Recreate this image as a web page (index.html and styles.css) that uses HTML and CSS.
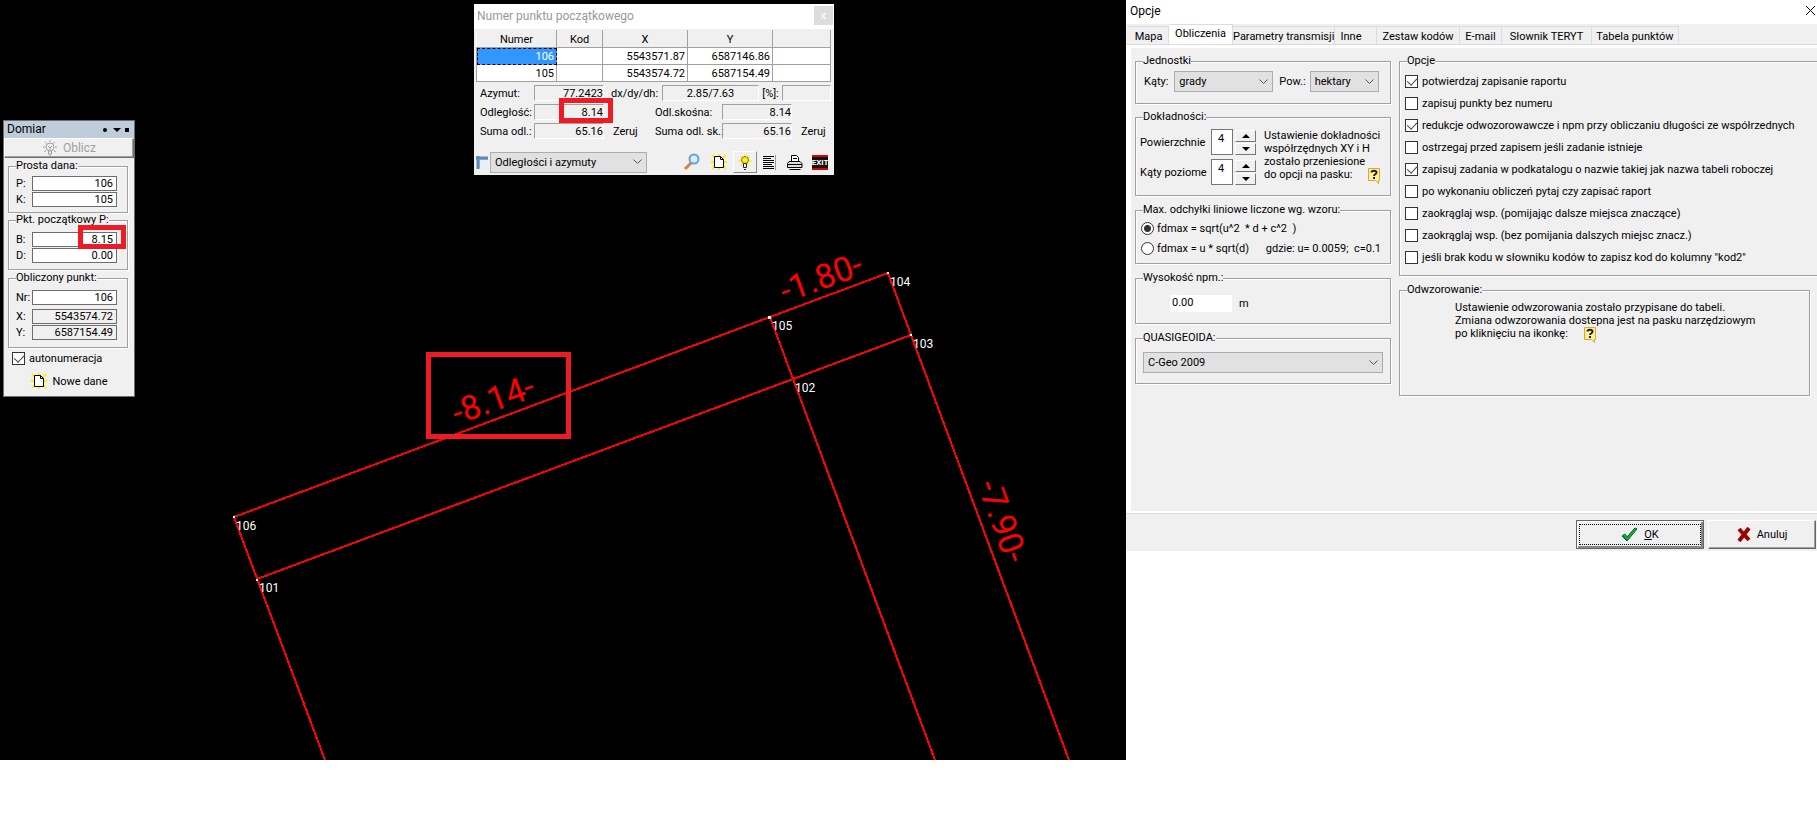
FILE: index.html
```
<!DOCTYPE html>
<html lang="pl">
<head>
<meta charset="utf-8">
<title>C-Geo – Opcje</title>
<link rel="stylesheet" href="styles.css">
</head>
<body>
<svg class="defs" aria-hidden="true">
  <symbol id="new-page" viewBox="0 0 18 16">
    <path d="M2 1l4 4M16 1l-4 4M1 8h16M2 15l4-4M16 15l-4-4M9 0v16" stroke="#ffee00" stroke-width="2" fill="none"/>
    <path d="M4.500 2.500h6l3 3v8h-9z" fill="#fff" stroke="#000"/><path d="M10.500 2.500v3h3" fill="none" stroke="#000"/>
  </symbol>
  <symbol id="help" viewBox="0 0 14 16">
    <path d="M1.500.5h11v12h-1v3l-3-3h-7z" fill="#fff0a0" stroke="#dba62c"/>
    <path d="M4.500 4.500c0-2.500 5-2.500 5 0 0 2-2.500 1.500-2.500 3.500M7 9v2" fill="none" stroke="#222" stroke-width="2"/>
  </symbol>
</svg>
<main class="screen">
  <section class="map">
    <svg class="plan" viewBox="0 0 1126 760" role="img" aria-label="Mapa">
      <g class="edges">
        <path d="M234 517L888 273L1069 760M257 579L911 335M234 517L325 760M770 317L935 760"/>
      </g>
      <g fill="#fff"><path d="M233 516h2v2h-2zM256 579h2v2h-2zM768 316h3v3h-3zM887 272h2v2h-2zM910 334h2v2h-2z"/></g>
      <g class="point">
        <text x="236" y="530">106</text><text x="259" y="592">101</text><text x="772" y="330">105</text>
        <text x="890" y="286">104</text><text x="913" y="348">103</text><text x="795" y="392">102</text>
      </g>
      <g class="measure">
        <text transform="translate(457 425) rotate(-20)">-8.14-</text>
        <text transform="translate(785 303) rotate(-20)">-1.80-</text>
        <text transform="translate(977 485) rotate(70)">-7.90-</text>
      </g>
    </svg>
    <div class="mark mark-map"></div>

    <form class="domiar">
      <header class="domiar-head"><span>Domiar</span>
        <svg width="29" height="8"><circle cx="3" cy="4" r="2"/><path d="M11 2h8l-4 4zM23 2h4v4h-4z"/></svg>
      </header>
      <button class="compute" type="button" disabled>
        <svg width="16" height="16" viewBox="0 0 16 16" fill="none" stroke="#a0a0a0"><circle cx="8" cy="7" r="4"/><path d="M8 0v2M1 7h2M13 7h2M3 2l1.500 1.500M13 2l-1.500 1.500M2 12l2-1.500M14 12l-2-1.500M6.500 11v3h3v-3M7 15h2M6 6l2 2 2-2M8 8v3"/></svg>Oblicz
      </button>
      <fieldset class="box given"><legend>Prosta dana:</legend>
        <label class="pair">P: <input value="106"></label>
        <label class="pair">K: <input value="105"></label>
      </fieldset>
      <fieldset class="box start"><legend>Pkt. początkowy P:</legend>
        <label class="pair">B: <input value="8.15"></label>
        <label class="pair">D: <input value="0.00"></label>
      </fieldset>
      <fieldset class="box result"><legend>Obliczony punkt:</legend>
        <label class="pair number">Nr: <input value="106"></label>
        <label class="pair">X: <input class="ro" value="5543574.72" readonly></label>
        <label class="pair">Y: <input class="ro" value="6587154.49" readonly></label>
      </fieldset>
      <label class="check auto"><input type="checkbox" checked>autonumeracja</label>
      <button class="flat fresh" type="button"><svg width="18" height="16"><use href="#new-page"/></svg>Nowe dane</button>
      <div class="mark mark-b"></div>
    </form>

    <form class="point-window">
      <header class="pw-head"><span>Numer punktu początkowego</span><button type="button" aria-label="Zamknij">x</button></header>
      <table class="grid">
        <colgroup><col class="c1"><col class="c2"><col class="c3"><col class="c3"><col class="c5"></colgroup>
        <thead><tr><th>Numer</th><th>Kod</th><th>X</th><th>Y</th><th></th></tr></thead>
        <tbody>
          <tr><td class="sel">106</td><td></td><td>5543571.87</td><td>6587146.86</td><td></td></tr>
          <tr><td>105</td><td></td><td>5543574.72</td><td>6587154.49</td><td></td></tr>
        </tbody>
      </table>
      <div class="results">
        <div class="line"><span class="name">Azymut:</span><output class="val">77.2423</output><span class="dx">dx/dy/dh:</span><output class="val mid">2.85/7.63</output><span class="pct">[%]:</span><output class="val rest"></output></div>
        <div class="line"><span class="name">Odległość:</span><output class="val">8.14</output><span class="zero"></span><span class="skew">Odl.skośna:</span><output class="val">8.14</output></div>
        <div class="line"><span class="name">Suma odl.:</span><output class="val">65.16</output><button class="flat zero" type="button">Zeruj</button><span class="skew">Suma odl. sk.:</span><output class="val">65.16</output><button class="flat zero" type="button">Zeruj</button></div>
      </div>
      <div class="tools">
        <svg width="12" height="13"><path d="M1 1h11v11H1z" fill="#a9c4e2"/><path d="M4 4h8v9H4z" fill="#e6eef7"/><path d="M0 2h12M2 0v13" stroke="#5f86b8" stroke-width="3"/></svg>
        <select aria-label="Raport"><option>Odległości i azymuty</option></select>
        <button class="flat find" type="button" aria-label="Szukaj"><svg width="18" height="18"><path d="M2 16l6-6" stroke="#d48536" stroke-width="3"/><circle cx="11" cy="6" r="4.500" fill="#d5efff" stroke="#6c9fd8" stroke-width="2"/></svg></button>
        <button class="flat" type="button" aria-label="Nowy"><svg width="18" height="16"><use href="#new-page"/></svg></button>
        <button class="flat raised" type="button" aria-label="Podpowiedź"><svg width="16" height="16"><path d="M8 0v14M1 7h14M3 2l10 10M13 2L3 12" stroke="#ffe900"/><circle cx="8" cy="6" r="3.500" fill="#ffef20" stroke="#876e00"/><path d="M6.500 9.500h3v4h-3z" fill="#fff" stroke="#222"/><path d="M7 15.500h2" stroke="#222"/></svg></button>
        <button class="flat" type="button" aria-label="Raport"><svg width="16" height="17"><path d="M1 2.500h11M1 4.500h8M1 6.500h11M1 8.500h11M1 10.500h9M1 12.500h11M1 14.500h11" stroke="#000"/><path d="M13.500 1v15" stroke="#999"/></svg></button>
        <button class="flat" type="button" aria-label="Drukuj"><svg width="18" height="17"><path d="M5.500 7V1.500h5l2 2V7" fill="#fff" stroke="#000"/><path d="M3 7.500h11l2 2v4H1.500v-4z" fill="#ddd" stroke="#000"/><path d="M1 10.500h15M3.500 15.500h11M7 4.500h4" stroke="#000"/></svg></button>
        <button class="flat exit" type="button">EXIT</button>
      </div>
      <div class="mark mark-d"></div>
    </form>
  </section>

  <form class="options">
    <header class="opt-head"><span>Opcje</span><button class="flat" type="button" aria-label="Zamknij"><svg width="12" height="12"><path d="M1 1l9 9M10 1l-9 9" stroke="#000"/></svg></button></header>
    <nav class="tabs">
      <button type="button" class="t1">Mapa</button><button type="button" class="t2 on">Obliczenia</button><button type="button" class="t3">Parametry transmisji</button><button type="button" class="t4">Inne</button><button type="button" class="t5">Zestaw kodów</button><button type="button" class="t6">E-mail</button><button type="button" class="t7">Słownik TERYT</button><button type="button" class="t8">Tabela punktów</button>
    </nav>
    <div class="page">
      <div class="left">
        <fieldset class="box units"><legend>Jednostki</legend>
          <div class="units-body">
            <label>Kąty: <select class="s-angle"><option>grady</option></select></label>
            <label>Pow.: <select class="s-area"><option>hektary</option></select></label>
          </div>
        </fieldset>
        <fieldset class="box precision"><legend>Dokładności:</legend>
          <div class="precision-body">
            <div class="spins">
              <div class="spin"><label for="area">Powierzchnie</label><input id="area" value="4"><span class="arrows"><button type="button" aria-label="Więcej" class="up"></button><button type="button" aria-label="Mniej" class="down"></button></span></div>
              <div class="spin"><label for="angle">Kąty poziome</label><input id="angle" value="4"><span class="arrows"><button type="button" aria-label="Więcej" class="up"></button><button type="button" aria-label="Mniej" class="down"></button></span></div>
            </div>
            <p class="note">Ustawienie dokładności<br>współrzędnych XY i H<br>zostało przeniesione<br>do opcji na pasku: <svg class="q" width="14" height="16"><use href="#help"/></svg></p>
          </div>
        </fieldset>
        <fieldset class="box limits"><legend>Max. odchyłki liniowe liczone wg. wzoru:</legend>
          <label class="check"><input type="radio" name="f" checked>fdmax = sqrt(u^2&nbsp; * d + c^2&nbsp; )</label>
          <div class="limit-row"><label class="check"><input type="radio" name="f">fdmax = u * sqrt(d)</label><span>gdzie: u= 0.0059;&nbsp; c=0.1</span></div>
        </fieldset>
        <fieldset class="box height"><legend>Wysokość npm.:</legend>
          <label><input value="0.00">m</label>
        </fieldset>
        <fieldset class="box geoid"><legend>QUASIGEOIDA:</legend>
          <select aria-label="Quasigeoida"><option>C-Geo 2009</option></select>
        </fieldset>
      </div>
      <div class="right">
        <fieldset class="box choices"><legend>Opcje</legend>
          <label class="check"><input type="checkbox" checked>potwierdzaj zapisanie raportu</label>
          <label class="check"><input type="checkbox">zapisuj punkty bez numeru</label>
          <label class="check"><input type="checkbox" checked>redukcje odwozorowawcze i npm przy obliczaniu długości ze współrzednych</label>
          <label class="check"><input type="checkbox">ostrzegaj przed zapisem jeśli zadanie istnieje</label>
          <label class="check"><input type="checkbox" checked>zapisuj zadania w podkatalogu o nazwie takiej jak nazwa tabeli roboczej</label>
          <label class="check"><input type="checkbox">po wykonaniu obliczeń pytaj czy zapisać raport</label>
          <label class="check"><input type="checkbox">zaokrąglaj wsp. (pomijając dalsze miejsca znaczące)</label>
          <label class="check"><input type="checkbox">zaokrąglaj wsp. (bez pomijania dalszych miejsc znacz.)</label>
          <label class="check"><input type="checkbox">jeśli brak kodu w słowniku kodów to zapisz kod do kolumny "kod2"</label>
        </fieldset>
        <fieldset class="box projection"><legend>Odwzorowanie:</legend>
          <p class="note">Ustawienie odwzorowania zostało przypisane do tabeli.<br>Zmiana odwzorowania dostepna jest na pasku narzędziowym<br>po kliknięciu na ikonkę: <svg class="q" width="14" height="16"><use href="#help"/></svg></p>
        </fieldset>
      </div>
    </div>
    <footer class="actions">
      <button type="button" class="ok"><span><svg width="17" height="15"><path d="M1 9l3-2 2 3 8-9 2 1L6 14z" fill="#00a000" stroke="#00308a" stroke-width="1"/><path d="M2 9l2-1 2 4 9-10" stroke="#10b010" stroke-width="2" fill="none"/></svg><span><u>O</u>K</span></span></button>
      <button type="button" class="cancel"><svg width="14" height="15"><path d="M2 2l10 11M12 1L2 14" stroke="#a00000" stroke-width="4"/></svg>Anuluj</button>
    </footer>
  </form>
</main>
</body>
</html>
```
FILE: styles.css
```
* { box-sizing: border-box; }
body { margin: 0; background: #fff; color: #000; font: 11px/13px Roboto, "Liberation Sans", sans-serif; }
button, input, select { font: inherit; color: inherit; margin: 0; padding: 0; border-radius: 0; }
label, legend, button { white-space: nowrap; }
svg { flex: none; }
.defs { position: absolute; width: 0; height: 0; }
.screen { display: grid; grid-template-columns: 1126fr 691fr; align-items: start; }

/* map canvas */
.map { position: relative; background: #000; }
.plan { display: block; width: 100%; height: auto; }
.edges { fill: none; stroke: #f00; stroke-width: 2; shape-rendering: crispEdges; }
.point { fill: #fff; font-size: 12px; }
.measure { fill: #f00; font-size: 34px; }
.mark { position: absolute; border: 5px solid #ed1c24; pointer-events: none; }
.mark-map { left: 426px; top: 352px; width: 145px; height: 87px; }
.mark-b { left: 74px; top: 104px; width: 48px; height: 24px; }
.mark-d { left: 85px; top: 94px; width: 54px; height: 25px; }

/* shared parts */
.box { --inset: 7px; min-width: 0; margin: 0; padding: 0 var(--inset); border: 1px solid #a0a0a0; box-shadow: 1px 1px 0 #fff, inset 1px 1px 0 #fff; }
.box legend { margin-left: calc(7px - var(--inset)); padding: 0; line-height: 14px; background: #f0f0f0; }
.flat { display: inline-flex; align-items: center; border: 0; background: none; }
.check { display: flex; align-items: center; gap: 4px; }
.check input { appearance: none; position: relative; flex: none; width: 13px; height: 13px; background: #fff; border: 1px solid #333; }
.check input[type="checkbox"]:checked::before { content: ""; position: absolute; left: 3px; top: 0; width: 5px; height: 8px; border: solid #444; border-width: 0 1px 1px 0; transform: rotate(42deg); }
.check input[type="radio"] { border-radius: 50%; }
.check input[type="radio"]:checked { background: radial-gradient(#333 3px, #fff 4px); }
select { appearance: none; height: 21px; padding: 0 4px; border: 1px solid #adadad; background: #e1e1e1 url("data:image/svg+xml,%3Csvg xmlns='http://www.w3.org/2000/svg' width='9' height='6'%3E%3Cpath d='M.5.5l4 4 4-4' fill='none' stroke='%23555'/%3E%3C/svg%3E") no-repeat right 4px center; }
.note { margin: 0; line-height: 13px; white-space: nowrap; }
.q { vertical-align: top; margin-left: 12px; }

/* Domiar panel */
.domiar { position: absolute; left: 3px; top: 120px; width: 132px; padding-bottom: 7px; background: #f0f0f0; border: 1px solid #6d6d6d; display: flex; flex-direction: column; }
.domiar-head { display: flex; justify-content: space-between; align-items: center; height: 17px; padding: 0 3px; background: #bfcddb; font-size: 12px; }
.compute { display: flex; align-items: center; justify-content: center; gap: 5px; height: 20px; background: #f0f0f0; color: #a0a0a0; border: 1px solid; border-color: #fff #6d6d6d #6d6d6d #fff; box-shadow: inset -1px -1px 0 #a0a0a0; font-size: 12px; }
.domiar .box { margin: 0 6px 0 4px; padding-right: 10px; }
.domiar .given { margin-top: 1px; padding-top: 2px; padding-bottom: 5px; }
.domiar .start { padding-top: 4px; padding-bottom: 6px; }
.domiar .result { margin-top: 1px; padding-top: 4px; padding-bottom: 7px; }
.pair { display: grid; grid-template-columns: 16px 1fr; align-items: center; height: 16px; }
.pair input { width: 100%; height: 15px; padding: 0 3px; border: 1px solid #6d6d6d; background: #fff; text-align: right; }
.pair .ro { background: #f0f0f0; }
.number { margin-bottom: 3px; }
.auto { margin: 4px 8px 0; }
.fresh { align-self: center; gap: 4px; margin-top: 8px; }

/* point window */
.point-window { position: absolute; left: 474px; top: 4px; width: 360px; background: #f0f0f0; }
.pw-head { display: flex; justify-content: space-between; padding: 2px 1px 2px 3px; height: 25px; background: #fff; color: #999; align-items: center; font-size: 12px; }
.pw-head button { width: 19px; height: 19px; border: 0; background: #ddd; color: #fff; align-self: flex-start; font-size: 11px; }
.grid { width: 355px; margin: 1px 0 0 2px; border-collapse: collapse; table-layout: fixed; background: #fff; }
.c1 { width: 80px; } .c2 { width: 46px; } .c3 { width: 85px; } .c5 { width: 58px; }
.grid th { height: 17px; padding: 0; font-weight: normal; background: #f0f0f0; border: 1px solid #a0a0a0; border-left-color: #fff; border-top-color: #f0f0f0; }
.grid th + th { border-left-color: #a0a0a0; }
.grid td { height: 17px; padding: 0 2px; text-align: right; border: 1px solid #a0a0a0; }
.grid .sel { background: #3296ff; color: #fff; outline: 1px dashed #000; outline-offset: -1px; }
.results { display: grid; grid-template-columns: minmax(0, 1fr); gap: 3px; padding: 3px 3px 0 6px; white-space: nowrap; }
.line { display: flex; align-items: center; height: 16px; }
.line > * { flex: none; }
.name { width: 54px; }
.val { width: 70px; height: 16px; border: 1px solid; border-color: #a0a0a0 #fff #fff #a0a0a0; text-align: right; line-height: 15px; }
.dx { width: 58px; padding-left: 7px; }
.val.mid { width: 97px; text-align: center; }
.pct { width: 23px; text-align: center; }
.line .rest { flex: 1; }
.zero { width: 51px; padding-left: 9px; }
.zero:last-child { width: auto; }
.skew { width: 67px; }
.tools { display: flex; align-items: center; gap: 8px; height: 36px; padding: 10px 6px 0 2px; }
.tools select { flex: 0 0 157px; margin-left: -6px; }
.find { margin-left: auto; margin-right: 1px; }
.raised { padding: 2px 3px; margin: 0 -3px; border: 1px solid; border-color: #fff #888 #888 #fff; }
.exit { width: 16px; height: 15px; justify-content: center; background: #111; color: #fff; font-weight: bold; font-size: 8px; line-height: 9px; border: solid #e00000; border-width: 2px 0; }

/* options dialog */
.options { min-width: 0; background: #f0f0f0; }
.opt-head { display: flex; justify-content: space-between; align-items: center; height: 24px; padding: 0 0 2px 4px; background: #fff; font-size: 12px; }
.tabs { display: flex; align-items: flex-end; height: 21px; padding-left: 3px; border-bottom: 1px solid #dcdcdc; }
.tabs button { height: 18px; padding-top: 2px; border: 1px solid #dcdcdc; border-left-width: 0; border-bottom: 0; background: #f0f0f0; }
.tabs .on { height: 20px; padding: 0 0 2px; background: #fff; }
.t1 { width: 40px; } .t2 { width: 64px; } .t3 { width: 102px; } .t4 { width: 42px; } .t5 { width: 83px; } .t6 { width: 42px; } .t7 { width: 90px; } .t8 { width: 87px; }
.tabs .t4 { padding-right: 9px; }
.page { display: flex; gap: 8px; min-height: 468px; padding: 6px 0 0 4px; border: solid #fff; border-width: 3px 0 2px 5px; overflow: hidden; }
.left { flex: 0 0 256px; min-width: 0; }
.right { flex: 1; min-width: 0; }
.units { --inset: 8px; padding-top: 3px; padding-bottom: 11px; }
.units-body { display: flex; }
.units label { display: inline-flex; align-items: center; }
.s-angle { width: 99px; margin: 0 6px 0 6px; }
.s-area { width: 69px; margin-left: 4px; }
.precision { --inset: 4px; margin-top: 6px; padding-top: 5px; padding-bottom: 10px; }
.precision-body { display: flex; gap: 8px; }
.spins { display: grid; gap: 4px; }
.spin { display: grid; grid-template-columns: 70px 22px 22px; column-gap: 1px; align-items: center; }
.spin input { width: 22px; height: 26px; padding: 0 0 7px 6px; border: 1px solid #777; background: #fff; }
.arrows { display: grid; gap: 1px; padding-left: 1px; }
.arrows button { display: grid; place-items: center; height: 12px; border: 1px solid; border-color: #fff #777 #777 #fff; background: #f0f0f0; }
.arrows button::before { content: ""; border: solid transparent; border-width: 0 4px; }
.arrows .up::before { border-bottom: 4px solid #000; }
.arrows .down::before { border-top: 4px solid #000; }
.precision .note { height: 52px; }
.limits { --inset: 5px; margin-top: 7px; padding-top: 1px; padding-bottom: 5px; }
.limits .check { height: 20px; gap: 3px; }
.limit-row { display: flex; justify-content: space-between; align-items: center; padding-right: 4px; }
.height { --inset: 34px; margin-top: 7px; padding-top: 10px; padding-bottom: 11px; }
.height label { display: flex; align-items: center; gap: 7px; }
.height input { width: 62px; height: 17px; padding: 0 2px 2px; border: 0; background: #fff; }
.geoid { margin-top: 7px; padding-top: 7px; padding-bottom: 10px; }
.geoid select { display: block; width: 100%; }
.choices { --inset: 5px; padding: 2px 0 7px 5px; border-right: 0; }
.choices .check { height: 22px; }
.projection { --inset: 55px; margin: 7px 7px 0 0; padding: 4px 0 55px 55px; }
.projection .note { height: 39px; }
.actions { display: flex; justify-content: flex-end; gap: 4px; padding: 6px 1px 2px 0; border-top: 1px solid #dcdcdc; }
.actions button { display: flex; align-items: center; justify-content: center; height: 29px; background: #f0f0f0; }
.ok { width: 128px; padding: 2px; border: 1px solid #666; box-shadow: inset 1px 1px 0 #fff, inset -2px -2px 0 #888; }
.ok > span { display: flex; flex: 1; align-items: center; justify-content: center; gap: 6px; height: 21px; border: 1px dotted #000; }
.ok > span > span { border: 0; }
.cancel { width: 108px; gap: 6px; border: 1px solid; border-color: #fff #666 #666 #fff; box-shadow: inset -1px -1px 0 #a0a0a0; }
```
